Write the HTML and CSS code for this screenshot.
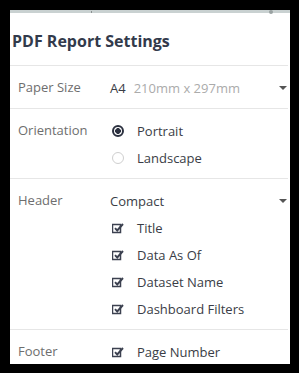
FILE: index.html
```html
<!DOCTYPE html>
<html>
<head>
<meta charset="utf-8">
<link rel="stylesheet" href="styles.css">
</head>
<body>
<div class="panel">
  <div class="topbar"><span class="tick"></span><span class="thumb"></span></div>
  <h1 class="title">PDF Report Settings</h1>
  <div class="row">
    <div class="label">Paper Size</div>
    <div class="field">
      <div class="item select"><span class="val">A4</span><span class="muted">210mm x 297mm</span><span class="caret"></span></div>
    </div>
  </div>
  <div class="row">
    <div class="label">Orientation</div>
    <div class="field">
      <div class="item"><span class="radio on"></span><span class="text">Portrait</span></div>
      <div class="item"><span class="radio"></span><span class="text">Landscape</span></div>
    </div>
  </div>
  <div class="row">
    <div class="label">Header</div>
    <div class="field">
      <div class="item select"><span class="val">Compact</span><span class="caret"></span></div>
      <div class="item"><svg class="cb" viewBox="0 0 12 12"><path d="M1.5 2.5h7v8h-8v-8z" fill="none" stroke="#3c4150" stroke-width="1.5"/><path d="M3 6.2l2.2 2.3L11 2" fill="none" stroke="#3c4150" stroke-width="1.9"/></svg><span class="text">Title</span></div>
      <div class="item"><svg class="cb" viewBox="0 0 12 12"><path d="M1.5 2.5h7v8h-8v-8z" fill="none" stroke="#3c4150" stroke-width="1.5"/><path d="M3 6.2l2.2 2.3L11 2" fill="none" stroke="#3c4150" stroke-width="1.9"/></svg><span class="text">Data As Of</span></div>
      <div class="item"><svg class="cb" viewBox="0 0 12 12"><path d="M1.5 2.5h7v8h-8v-8z" fill="none" stroke="#3c4150" stroke-width="1.5"/><path d="M3 6.2l2.2 2.3L11 2" fill="none" stroke="#3c4150" stroke-width="1.9"/></svg><span class="text">Dataset Name</span></div>
      <div class="item"><svg class="cb" viewBox="0 0 12 12"><path d="M1.5 2.5h7v8h-8v-8z" fill="none" stroke="#3c4150" stroke-width="1.5"/><path d="M3 6.2l2.2 2.3L11 2" fill="none" stroke="#3c4150" stroke-width="1.9"/></svg><span class="text">Dashboard Filters</span></div>
    </div>
  </div>
  <div class="row">
    <div class="label">Footer</div>
    <div class="field">
      <div class="item"><svg class="cb" viewBox="0 0 12 12"><path d="M1.5 2.5h7v8h-8v-8z" fill="none" stroke="#3c4150" stroke-width="1.5"/><path d="M3 6.2l2.2 2.3L11 2" fill="none" stroke="#3c4150" stroke-width="1.9"/></svg><span class="text">Page Number</span></div>
    </div>
  </div>
</div>
</body>
</html>
```
FILE: styles.css
```css
html, body {
  margin: 0;
  padding: 0;
  background: #000;
  height: 373px;
  overflow: hidden;
}
body {
  padding: 10px 9px 0 10px;
  font-family: "Open Sans", sans-serif;
}
.panel {
  width: 280px;
  height: 354px;
  background: #fff;
  overflow: hidden;
}
.topbar {
  height: 3px;
  background: #c9d1d1;
  position: relative;
}
.tick {
  position: absolute;
  left: 81px;
  top: 1px;
  width: 1px;
  height: 2px;
  background: #8a9090;
}
.thumb {
  position: absolute;
  left: 259px;
  top: 0;
  width: 4px;
  height: 4px;
  border-radius: 2px;
  background: #9aa2a2;
}
.title {
  margin: 0;
  padding: 0 0 0 2px;
  height: 52px;
  line-height: 56px;
  font-size: 16px;
  font-weight: 700;
  color: #323a4b;
  border-bottom: 1px solid #e6e6e6;
  margin-right: 2px;
}
.row {
  display: flex;
  padding: 8px 0 7px;
  border-bottom: 1px solid #e6e6e6;
  margin-right: 2px;
}
.label {
  width: 92px;
  padding-left: 8px;
  line-height: 27px;
  font-size: 13px;
  color: #6e6e6e;
}
.field {
  flex: 1;
}
.item {
  display: flex;
  align-items: center;
  height: 27px;
  font-size: 13px;
  color: #3a3d46;
}
.select .val {
  margin-right: 8px;
}
.muted {
  color: #ababab;
}
.caret {
  margin-left: auto;
  margin-right: 1px;
  width: 0;
  height: 0;
  border-left: 4px solid transparent;
  border-right: 4px solid transparent;
  border-top: 4px solid #555;
}
.radio {
  box-sizing: border-box;
  width: 12px;
  height: 12px;
  border-radius: 50%;
  border: 1px solid #cfcfcf;
  margin: 0 13px 0 2px;
  background: #fff;
}
.radio.on {
  border: 2px solid #2c3140;
  background: radial-gradient(circle, #2c3140 0 2.6px, #fff 3.1px);
}
.cb {
  width: 12px;
  height: 12px;
  margin: 0 13px 0 2px;
}
.text {
  color: #3a3d46;
}
```
